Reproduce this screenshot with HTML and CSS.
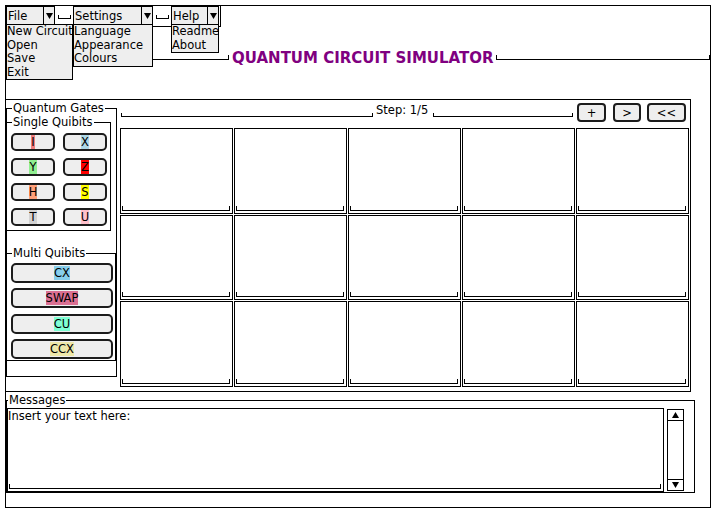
FILE: index.html
```html
<!DOCTYPE html>
<html>
<head>
<meta charset="utf-8">
<title>Quantum Circuit Simulator</title>
<link rel="stylesheet" href="styles.css">
</head>
<body>
<div class="frame">
  <header class="header">
    <nav class="menubar">
      <div class="menu menu-file">
        <span class="menu-label">File</span>
        <span class="menu-arrow"><svg width="7" height="6" viewBox="0 0 7 6"><polygon points="0,0 7,0 3.5,6" fill="#000"/></svg></span>
        <ul class="dropdown dropdown-file">
          <li>New Circuit</li>
          <li>Open</li>
          <li>Save</li>
          <li>Exit</li>
        </ul>
      </div>
      <span class="menu-gap"><span class="bracket"></span></span>
      <div class="menu menu-settings">
        <span class="menu-label">Settings</span>
        <span class="menu-arrow"><svg width="7" height="6" viewBox="0 0 7 6"><polygon points="0,0 7,0 3.5,6" fill="#000"/></svg></span>
        <ul class="dropdown dropdown-settings">
          <li>Language</li>
          <li>Appearance</li>
          <li>Colours</li>
        </ul>
      </div>
      <span class="menu-gap"><span class="bracket"></span></span>
      <div class="menu menu-help">
        <span class="menu-label">Help</span>
        <span class="menu-arrow"><svg width="7" height="6" viewBox="0 0 7 6"><polygon points="0,0 7,0 3.5,6" fill="#000"/></svg></span>
        <ul class="dropdown dropdown-help">
          <li>Readme</li>
          <li>About</li>
        </ul>
      </div>
    </nav>
    <div class="title-row">
      <span class="rule rule-left"></span>
      <h1 class="title">QUANTUM CIRCUIT SIMULATOR</h1>
      <span class="rule rule-right"></span>
    </div>
  </header>

  <main class="workspace">
    <fieldset class="gates">
      <legend>Quantum Gates</legend>
      <fieldset class="group single">
        <legend>Single Quibits</legend>
        <div class="single-grid">
          <button class="gate"><span class="tag tag-i">I</span></button>
          <button class="gate"><span class="tag tag-x">X</span></button>
          <button class="gate"><span class="tag tag-y">Y</span></button>
          <button class="gate"><span class="tag tag-z">Z</span></button>
          <button class="gate"><span class="tag tag-h">H</span></button>
          <button class="gate"><span class="tag tag-s">S</span></button>
          <button class="gate"><span class="tag tag-t">T</span></button>
          <button class="gate"><span class="tag tag-u">U</span></button>
        </div>
      </fieldset>
      <fieldset class="group multi">
        <legend>Multi Quibits</legend>
        <div class="multi-list">
          <button class="gate gate-wide"><span class="tag tag-cx">CX</span></button>
          <button class="gate gate-wide"><span class="tag tag-swap">SWAP</span></button>
          <button class="gate gate-wide"><span class="tag tag-cu">CU</span></button>
          <button class="gate gate-wide"><span class="tag tag-ccx">CCX</span></button>
        </div>
      </fieldset>
    </fieldset>

    <section class="circuit">
      <div class="step-row">
        <span class="seg seg-left"></span>
        <span class="step-label">Step: 1/5</span>
        <span class="seg seg-right"></span>
        <button class="step-btn btn-add">+</button>
        <button class="step-btn btn-next">&gt;</button>
        <button class="step-btn btn-back">&lt;&lt;</button>
      </div>
      <div class="grid">
        <div class="cell"></div><div class="cell"></div><div class="cell"></div><div class="cell"></div><div class="cell"></div>
        <div class="cell"></div><div class="cell"></div><div class="cell"></div><div class="cell"></div><div class="cell"></div>
        <div class="cell"></div><div class="cell"></div><div class="cell"></div><div class="cell"></div><div class="cell"></div>
      </div>
    </section>
  </main>

  <fieldset class="messages">
    <legend>Messages</legend>
    <div class="messages-body">
      <div class="textarea"><span class="text">Insert your text here:</span></div>
      <div class="scrollbar">
        <span class="scroll-btn scroll-up"><svg width="7" height="6" viewBox="0 0 7 6"><polygon points="0,6 7,6 3.5,0" fill="#000"/></svg></span>
        <span class="scroll-btn scroll-down"><svg width="7" height="6" viewBox="0 0 7 6"><polygon points="0,0 7,0 3.5,6" fill="#000"/></svg></span>
      </div>
    </div>
  </fieldset>
</div>
</body>
</html>
```

FILE: styles.css
```css
* { box-sizing: border-box; }

html, body {
  margin: 0;
  padding: 0;
  background: #fff;
}

body {
  font-family: "DejaVu Sans", "Liberation Sans", sans-serif;
  font-size: 11.5px;
  color: #000;
}

.frame {
  margin: 5px 0 0 5px;
  width: 706px;
  height: 503px;
  border: 1px solid #000;
  display: flex;
  flex-direction: column;
}

/* ---------- header / menu ---------- */
.header {
  flex: none;
  height: 93px;
  display: flex;
  flex-direction: column;
}

.menubar {
  display: flex;
  align-items: flex-start;
  width: 215px;
  height: 21px;
  border-right: 1px solid #000;
  border-bottom: 1px solid #000;
  position: relative;
  z-index: 2;
}

.menu {
  position: relative;
  display: flex;
  height: 19px;
  border: 1px solid #000;
  background: #eee;
}

.menu-file { width: 49px; }
.menu-settings { width: 80px; }
.menu-help { width: 48px; }

.menu-label {
  flex: 1;
  padding: 1px 0 0 1px;
  line-height: 16px;
  white-space: nowrap;
}

.menu-arrow {
  width: 11px;
  border-left: 1px solid #000;
  display: flex;
  align-items: center;
  justify-content: center;
}

.menu-gap {
  width: 18px;
  height: 19px;
  padding: 9px 0 0 3px;
}

.menu-gap .bracket {
  display: block;
  width: 13px;
  height: 4px;
  border: 1px solid #000;
  border-top: none;
}

.dropdown {
  position: absolute;
  top: 100%;
  left: -1px;
  margin: 0;
  padding: 0;
  list-style: none;
  background: #eee;
  border: 1px solid #000;
}

.dropdown li {
  line-height: 13.5px;
  white-space: nowrap;
}

.dropdown-file { width: 67px; }
.dropdown-settings { width: 80px; }
.dropdown-help { width: 48px; }

.title-row {
  display: flex;
  align-items: flex-start;
  margin-top: 21px;
  height: 20px;
}

.title-row .rule {
  height: 5px;
  margin-top: 7px;
  border: 1px solid #000;
  border-top: none;
}

.rule-left { flex: none; width: 223px; }
.rule-right { flex: 1; }

.title {
  margin: 0 2px 0 3px;
  font-size: 15px;
  line-height: 20px;
  font-weight: bold;
  color: #800080;
  white-space: nowrap;
}

/* ---------- workspace ---------- */
.workspace {
  flex: none;
  display: flex;
  width: 685px;
  height: 293px;
  border: 1px solid #000;
  border-left: none;
}

fieldset {
  margin: 0;
  padding: 0;
  border: 1px solid #000;
  min-width: 0;
}

legend {
  padding: 0 1px;
  margin-left: 5px;
  line-height: 13px;
  white-space: nowrap;
}

.gates {
  flex: none;
  width: 111px;
  height: 275px;
  margin-top: 2px;
}

.group {
  border-left: none;
}

.single {
  width: 104px;
  margin-top: 1px;
}

.single-grid {
  display: grid;
  grid-template-columns: 44px 44px;
  grid-auto-rows: 18px;
  column-gap: 8px;
  row-gap: 7px;
  padding: 4px 3px 4px 4px;
}

.multi {
  width: 109px;
  margin-top: 16px;
}

.multi-list {
  display: grid;
  grid-auto-rows: 20px;
  row-gap: 5.33px;
  padding: 3px 2px 1px 4px;
}

.gate {
  display: flex;
  align-items: center;
  justify-content: center;
  margin: 0;
  padding: 0;
  border: 2px solid #1c1c1c;
  border-radius: 5px;
  background: #eee;
  font: inherit;
  color: #000;
}

.tag {
  line-height: 14px;
}

.tag-i { background: #f08080; }
.tag-x { background: #add8e6; }
.tag-y { background: #90ee90; }
.tag-z { background: #ff0000; }
.tag-h { background: #ffa07a; }
.tag-s { background: #ffff00; }
.tag-t { background: #d3d3d3; }
.tag-u { background: #ffc0cb; }
.tag-cx { background: #87ceeb; }
.tag-swap { background: #db7093; }
.tag-cu { background: #7fffd4; }
.tag-ccx { background: #eee8aa; }

/* ---------- circuit ---------- */
.circuit {
  flex: 1;
  display: flex;
  flex-direction: column;
}

.step-row {
  flex: none;
  display: flex;
  align-items: flex-start;
  height: 27px;
  padding: 0 4px;
}

.seg {
  height: 4px;
  margin-top: 13px;
  border: 1px solid #000;
  border-top: none;
}

.seg-left { width: 252px; }
.seg-right { width: 140px; }

.step-label {
  width: 57px;
  margin: 3px 0 0 3px;
  line-height: 14px;
  white-space: nowrap;
}

.step-btn {
  height: 19px;
  margin-top: 3px;
  padding: 0;
  border: 2px solid #1c1c1c;
  border-radius: 4px;
  background: #eee;
  font: inherit;
  color: #000;
}

.btn-add { width: 29px; margin-left: 4px; }
.btn-next { width: 28px; margin-left: 7px; }
.btn-back { width: 39px; margin-left: 6px; }

.grid {
  display: grid;
  grid-template-columns: repeat(5, 113px);
  grid-template-rows: repeat(3, 1fr);
  gap: 1px;
  width: 569px;
  height: 259px;
  margin: 1px 0 0 3px;
}

.cell {
  display: flex;
  align-items: flex-end;
  border: 1px solid #000;
  padding: 0 2px 2px 1px;
}

.cell::after {
  content: "";
  flex: 1;
  height: 4px;
  border: 1px solid #000;
  border-top: none;
}

/* ---------- messages ---------- */
.messages {
  flex: none;
  width: 689px;
  height: 99px;
  margin-top: 2px;
}

.messages legend {
  margin-left: 1px;
}

.messages-body {
  display: flex;
  align-items: flex-start;
  padding-top: 1px;
}

.textarea {
  width: 657px;
  height: 84px;
  border: 1px solid #000;
  display: flex;
  flex-direction: column;
  justify-content: space-between;
  line-height: 14px;
}

.textarea::after {
  content: "";
  height: 4px;
  margin: 0 2px 2px 1px;
  border: 1px solid #000;
  border-top: none;
}

.scrollbar {
  width: 17px;
  height: 82px;
  margin: 1px 0 0 3px;
  border: 1px solid #000;
  display: flex;
  flex-direction: column;
  justify-content: space-between;
}

.scroll-btn {
  height: 11px;
  display: flex;
  align-items: center;
  justify-content: center;
}

.scroll-up { border-bottom: 1px solid #000; }
.scroll-down { border-top: 1px solid #000; }
```
